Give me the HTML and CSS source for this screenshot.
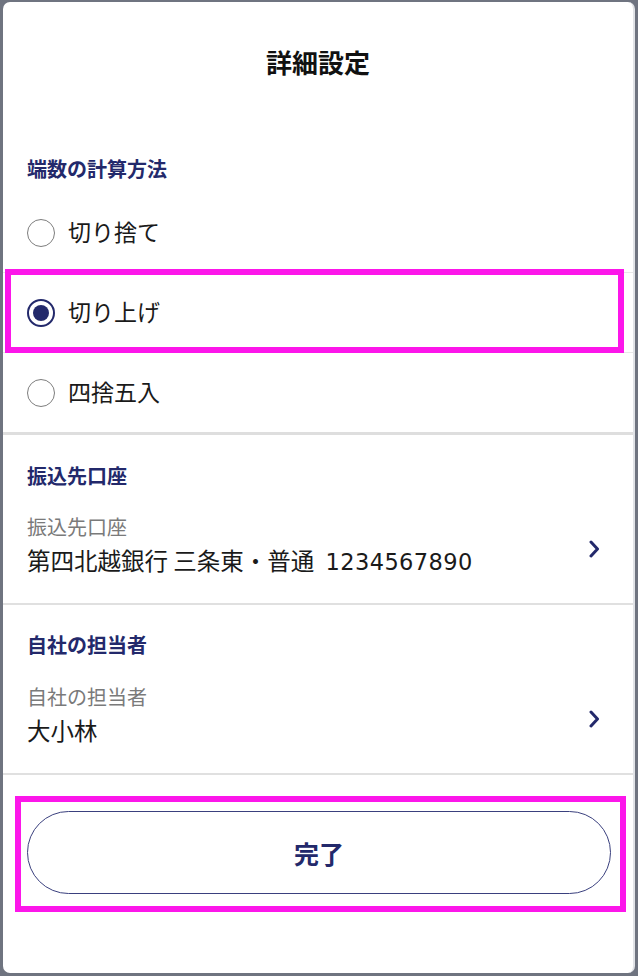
FILE: index.html
```html
<!DOCTYPE html>
<html lang="ja">
<head>
  <meta charset="UTF-8">
  <meta name="viewport" content="width=device-width, initial-scale=1.0">
  <title>詳細設定</title>
  <link rel="stylesheet" href="styles.css">
</head>
<body>
  <div class="sheet">
    <header class="sheet-header">
      <h1>詳細設定</h1>
    </header>

    <!-- 端数の計算方法 -->
    <section class="group group-radio">
      <h2 class="group-title">端数の計算方法</h2>
      <div class="radio-row">
        <span class="radio"></span>
        <span class="radio-label">切り捨て</span>
      </div>
      <div class="radio-row highlight">
        <span class="radio checked"></span>
        <span class="radio-label">切り上げ</span>
      </div>
      <div class="radio-row">
        <span class="radio"></span>
        <span class="radio-label">四捨五入</span>
      </div>
    </section>

    <!-- 振込先口座 -->
    <section class="group">
      <h2 class="group-title">振込先口座</h2>
      <div class="select-row">
        <div class="select-text">
          <div class="select-label">振込先口座</div>
          <div class="select-value">第四北越銀行 三条東・普通 <span class="num">1234567890</span></div>
        </div>
        <svg class="chevron" width="12" height="18" viewBox="0 0 12 18">
          <path d="M3 2 L9.5 9 L3 16" fill="none" stroke="#23296b" stroke-width="3" stroke-linecap="round" stroke-linejoin="round"/>
        </svg>
      </div>
    </section>

    <!-- 自社の担当者 -->
    <section class="group group-last">
      <h2 class="group-title">自社の担当者</h2>
      <div class="select-row">
        <div class="select-text">
          <div class="select-label">自社の担当者</div>
          <div class="select-value">大小林</div>
        </div>
        <svg class="chevron" width="12" height="18" viewBox="0 0 12 18">
          <path d="M3 2 L9.5 9 L3 16" fill="none" stroke="#23296b" stroke-width="3" stroke-linecap="round" stroke-linejoin="round"/>
        </svg>
      </div>
    </section>

    <footer class="sheet-footer">
      <div class="btn-wrap">
        <button class="btn-done">完了</button>
      </div>
    </footer>
  </div>
</body>
</html>
```

FILE: styles.css
```css
/* Base */
html, body {
  margin: 0;
  height: 100%;
}

body {
  background-color: #6f7480;
  font-family: "Noto Sans CJK JP", "Noto Sans", sans-serif;
  color: #1a1a1a;
  padding: 2px 3px 3px 3px;
  box-sizing: border-box;
}

/* Sheet card */
.sheet {
  background-color: #fff;
  border-radius: 7px;
  border-right: 2px solid #e1e3e7;
  height: 100%;
  display: flex;
  flex-direction: column;
}

.sheet-header {
  padding: 42px 0 42px;
  text-align: center;
}

.sheet-header h1 {
  margin: 0;
  font-size: 26px;
  line-height: 36px;
  font-weight: 700;
  color: #111;
}

/* Groups */
.group {
  padding: 27px 0 27px 24px;
  border-bottom: 2px solid #e0e0e0;
}

.group-radio {
  padding: 33px 0 0 0;
  border-bottom: 3px solid #dedede;
}

.group-last {
  padding-top: 26px;
  padding-bottom: 27px;
}

.group-title {
  margin: 0;
  font-size: 20px;
  line-height: 28px;
  font-weight: 700;
  color: #23296b;
}

.group-radio .group-title {
  padding-left: 24px;
  margin-bottom: 10px;
}

/* Radio rows */
.radio-row {
  display: flex;
  align-items: center;
  gap: 13px;
  height: 79px;
  padding-left: 24px;
  border-bottom: 1px solid #e8e8e8;
}

.radio-row:last-child {
  border-bottom: none;
}

.radio {
  width: 28px;
  height: 28px;
  box-sizing: border-box;
  border: 1.5px solid #7d7d7d;
  border-radius: 50%;
  display: flex;
  align-items: center;
  justify-content: center;
  flex-shrink: 0;
}

.radio.checked {
  border: 2px solid #23296b;
}

.radio.checked::before {
  content: "";
  width: 16px;
  height: 16px;
  border-radius: 50%;
  background-color: #23296b;
}

.radio-label {
  font-size: 23px;
  line-height: 32px;
  color: #1a1a1a;
  margin-top: -4px;
}

/* Annotation boxes */
.highlight {
  position: relative;
}

.highlight::after {
  content: "";
  position: absolute;
  top: -4px;
  bottom: -1px;
  left: 2px;
  right: 9px;
  border: 6px solid #fc16ea;
  pointer-events: none;
}

/* Select rows */
.select-row {
  display: flex;
  align-items: center;
  margin-top: 23px;
  padding-right: 33px;
}

.group-last .select-row {
  margin-top: 24px;
}

.select-text {
  flex: 1;
}

.select-label {
  font-size: 20px;
  line-height: 28px;
  color: #7a7a7a;
}

.select-value {
  margin-top: 3px;
  font-size: 23.5px;
  line-height: 32px;
  height: 32px;
  color: #1a1a1a;
}

.select-value .num {
  font-family: "DejaVu Sans", "Noto Sans CJK JP", sans-serif;
  font-size: 22.5px;
  letter-spacing: 0.4px;
  line-height: 1;
  margin-left: 6px;
}

.chevron {
  margin-top: 9px;
}

/* Footer / button */
.sheet-footer {
  padding: 36px 22px 0 24px;
}

.btn-wrap {
  position: relative;
}

.btn-wrap::after {
  content: "";
  position: absolute;
  top: -15px;
  bottom: -18px;
  left: -12px;
  right: -15px;
  border: 6px solid #fc16ea;
  pointer-events: none;
}

.btn-done {
  display: block;
  width: 100%;
  height: 83px;
  background-color: #fff;
  border: 1.5px solid #3a407e;
  border-radius: 42px;
  font-family: "Noto Sans CJK JP", "Noto Sans", sans-serif;
  font-size: 25px;
  font-weight: 700;
  color: #23296b;
}
```
